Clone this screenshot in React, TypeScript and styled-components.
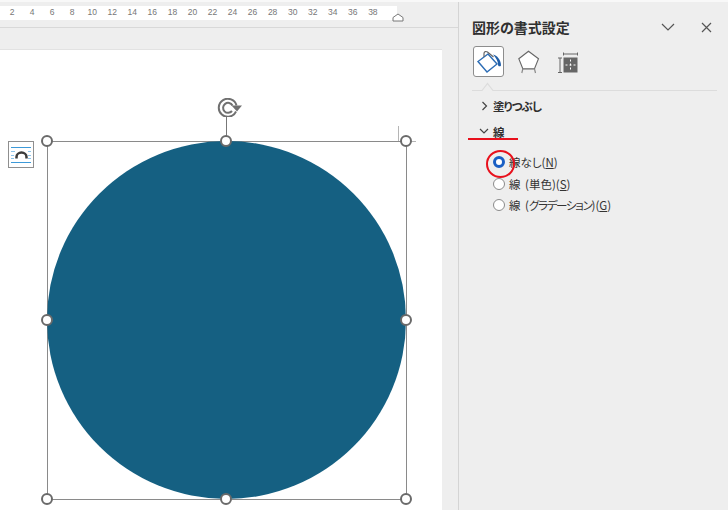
import React from "react";
import styled, { createGlobalStyle } from "styled-components";

const Global = createGlobalStyle`
  html, body { margin: 0; padding: 0; background: #eeeeee; }
  body { width: 728px; height: 510px; overflow: hidden; font-family: "Noto Sans CJK JP", "Liberation Sans", sans-serif; }
`;
const Shell = styled.div`display: flex; width: 728px; height: 510px; box-sizing: border-box; border-top: 2px solid #f8f8f8; overflow: hidden; background: #eee;`;
const Editor = styled.div`width: 458px; flex: none; display: flex; flex-direction: column; border-right: 1px solid #d4d4d4;`;
const RulerBar = styled.div`height: 26px; flex: none; box-sizing: border-box; padding-top: 4px; border-bottom: 1px solid #d8d8d8; position: relative;`;
const Ruler = styled.div`width: 397px; height: 14px; background: #fff; display: flex; padding-left: 2px; box-sizing: border-box;`;
const Tick = styled.span`width: 20.05px; flex: none; text-align: center; font: 8.5px/13px "Liberation Sans", sans-serif; color: #777;`;
const Marker = styled.svg`position: absolute; left: 392px; top: 11px;`;
const Gutter = styled.div`height: 21px; flex: none;`;
const Page = styled.div`width: 442px; flex: 1; background: #fff; border-top: 1px solid #e2e2e2; box-sizing: border-box; padding: 91px 0 0 47px; position: relative;`;
const Selection = styled.div`position: relative; width: 360px; height: 359px; box-sizing: border-box; border: 1px solid #8a8a8a;`;
const Circle = styled.div`width: calc(100% + 1px); height: calc(100% + 1px); margin: -1px 0 0 -1px; border-radius: 50%; background: #156082;`;
const Handle = styled.span<{ $x: number; $y: number }>`
  position: absolute; left: ${p => p.$x}px; top: ${p => p.$y}px; width: 12px; height: 12px; margin: -6px 0 0 -6px;
  box-sizing: border-box; border-radius: 50%; background: #fff; border: 2px solid #6a6a6a;
`;
const Stem = styled.span`position: absolute; left: 178px; top: -26px; width: 1px; height: 26px; background: #777;`;
const Rotate = styled.svg`position: absolute; left: 169px; top: -44px;`;
const GuideV = styled.span`position: absolute; left: 350px; top: -16px; width: 1px; height: 15px; background: #b5b5b5;`;
const GuideH = styled.span`position: absolute; left: 358px; top: -1px; width: 10px; height: 1px; background: #b5b5b5;`;
const LayoutButton = styled.div`position: absolute; left: 8px; top: 91px; width: 26px; height: 27px; box-sizing: border-box; background: #fff; border: 1px solid #8f8f8f; display: flex; align-items: center; justify-content: center;`;
const Panel = styled.aside`flex: 1; padding: 15px 13px 0 13px; color: #2b2b2b; min-width: 0;`;
const Head = styled.div`display: flex; align-items: center; height: 20px;`;
const Title = styled.h2`margin: 0; flex: 1; font-size: 14px; font-weight: 700; line-height: 20px; color: #303030; letter-spacing: -0.05px;`;
const HeadIcon = styled.svg`display: block; margin-left: 26px; &:last-child { margin-right: 3px; }`;
const Tabs = styled.div`display: flex; align-items: center; margin-top: 9px; padding-left: 1px;`;
const Tab = styled.div<{ $on?: boolean }>`
  width: 31px; height: 31px; box-sizing: border-box; margin-right: 10px; display: flex; align-items: center; justify-content: center;
  ${p => p.$on ? "background:#fff;border:1px solid #8d8d8d;border-radius:3px;" : ""}
`;
const TabIcon = styled.svg`display: block; overflow: visible;`;
const Divider = styled.svg`display: block; margin-top: 5px;`;
const Group = styled.div`display: flex; align-items: center; font-size: 11.5px; font-weight: 600; color: #303030; font-feature-settings: "palt";`;
const Fill = styled(Group)`height: 18px; margin-top: 6px; padding-left: 9px; gap: 5px;`;
const FillLabel = styled.span`letter-spacing: -1px;`;
const Line = styled(Group)`height: 15px; margin-top: 9px; padding-left: 7px; gap: 4px;`;
const RedLine = styled.div`width: 50px; height: 2px; background: #e8101c; margin: -1px 0 0 -4px;`;
const Options = styled.div`display: flex; flex-direction: column; margin-top: 11px; padding-left: 20.5px;`;
const Option = styled.label`display: flex; align-items: center; height: 21.7px; font-size: 11.5px; color: #333; gap: 4.5px; white-space: nowrap; position: relative; font-feature-settings: "palt"; word-spacing: 2px;`;
const Radio = styled.span<{ $on?: boolean }>`
  width: 12px; height: 12px; box-sizing: border-box; border-radius: 50%; flex: none; background: #fff;
  border: ${p => p.$on ? "3.5px solid #1a5fc4" : "1px solid #8b8b8b"};
`;
const Ring = styled.span`position: absolute; left: -6.5px; top: -1px; width: 29px; height: 28px; box-sizing: border-box; border: 2px solid #e8101c; border-radius: 50%;`;
const Key = styled.span`text-decoration: underline;`;
const Narrow = styled.span`letter-spacing: -1.3px;`;

const ticks = Array.from({ length: 19 }, (_, i) => (i + 1) * 2);
const handles = [[-1,-1],[178,-1],[358,-1],[-1,178],[358,178],[-1,357],[178,357],[358,357]];

export default function App() {
  return (
    <Shell>
      <Global />
      <Editor>
        <RulerBar>
          <Ruler>{ticks.map(t => <Tick key={t}>{t}</Tick>)}</Ruler>
          <Marker width="12" height="9" viewBox="0 0 12 9"><path d="M1 8V4.500L6 1l5 3.500V8z" fill="#fff" stroke="#777" /></Marker>
        </RulerBar>
        <Gutter />
        <Page>
          <LayoutButton>
            <svg width="22" height="22" viewBox="0 0 22 22">
              <path d="M1 3.500h20M1 18.500h20" stroke="#3d9ad9" />
              <path d="M1 7.500h4M18 7.500h3M1 11.500h3M18 11.500h3M1 14.500h3M18 14.500h3" stroke="#8cc4ea" />
              <path d="M6.500 14.500V13a5 4.500 0 0 1 10 0v1.500" fill="none" stroke="#3b3b3b" strokeWidth="2.500" />
            </svg>
          </LayoutButton>
          <Selection>
            <Circle />
            <Stem />
            <GuideV />
            <GuideH />
            <Rotate width="27" height="19" viewBox="0 0 27 19" fill="none">
              <path d="M19 13.500A9 9 0 1 1 19.500 7.500" stroke="#707070" strokeWidth="2" />
              <path d="M15 13A5 5 0 1 1 15.500 7.500" stroke="#707070" strokeWidth="2" />
              <path d="M14.500 7.500h10.500l-5 6z" fill="#707070" />
            </Rotate>
            {handles.map(([x, y]) => <Handle key={`${x}-${y}`} $x={x} $y={y} />)}
          </Selection>
        </Page>
      </Editor>
      <Panel>
        <Head>
          <Title>図形の書式設定</Title>
          <HeadIcon width="14" height="14" viewBox="0 0 14 14"><path d="M1 4l6 6 6-6" fill="none" stroke="#555" strokeWidth="1.200" /></HeadIcon>
          <HeadIcon width="11" height="11" viewBox="0 0 11 11"><path d="M1 1l9 9M10 1l-9 9" stroke="#555" strokeWidth="1.200" /></HeadIcon>
        </Head>
        <Tabs>
          <Tab $on>
            <TabIcon width="26" height="26" viewBox="0 0 26 26" fill="none">
              <path d="M12 5L2 12.500 11 23l10-8z" stroke="#2d6db5" strokeWidth="1.400" fill="#fff" />
              <path d="M8 8V4.500C8 2.500 10 2 11.500 3l6 5" stroke="#666" strokeWidth="1.200" />
              <path d="M17 5.500c4 1 8 5 8 11-1 1.500-3 1-3-1 0-3-2-7-5-10z" fill="#1f5ea8" />
            </TabIcon>
          </Tab>
          <Tab>
            <TabIcon width="24" height="26" viewBox="0 0 24 26" fill="none">
              <path d="M10.500 2.200l10 7.600-4 10H4.800l-4-10z" stroke="#666" strokeWidth="1.100" fill="#fff" />
              <path d="M4.800 20l-1 4M16.500 20l1 4M4.800 20h11.700" stroke="#8a8a8a" strokeWidth="1.200" />
            </TabIcon>
          </Tab>
          <Tab>
            <TabIcon width="24" height="26" viewBox="0 0 24 26" fill="none">
              <path d="M4.500 5h14M4.500 3.500v3M18.500 3.500v3" stroke="#666" />
              <path d="M-1 9h4M-1 23.500h4M1 9v14.500" stroke="#666" />
              <rect x="4.500" y="8.500" width="14" height="15" fill="#666" />
              <path d="M11.500 10.500v11M6.500 16h10" stroke="#fff" strokeDasharray="2 2" />
            </TabIcon>
          </Tab>
        </Tabs>
        <Divider width="245" height="9" viewBox="0 0 245 9"><path d="M0 8.500h10l5.500-7 5.500 7h224" fill="none" stroke="#dcdcdc" strokeWidth="1.200" /></Divider>
        <Fill>
          <svg width="7" height="10" viewBox="0 0 7 10"><path d="M1.500 1l4 4-4 4" fill="none" stroke="#444" strokeWidth="1.200" /></svg>
          <FillLabel>塗りつぶし</FillLabel>
        </Fill>
        <Line>
          <svg width="10" height="7" viewBox="0 0 10 7"><path d="M1 1l4 4 4-4" fill="none" stroke="#444" strokeWidth="1.200" /></svg>
          線
        </Line>
        <RedLine />
        <Options>
          <Option><Radio $on /><span>線なし(<Key>N</Key>)</span><Ring /></Option>
          <Option><Radio /><span>線 (単色)(<Key>S</Key>)</span></Option>
          <Option><Radio /><span>線 (<Narrow>グラデーション</Narrow>)(<Key>G</Key>)</span></Option>
        </Options>
      </Panel>
    </Shell>
  );
}
